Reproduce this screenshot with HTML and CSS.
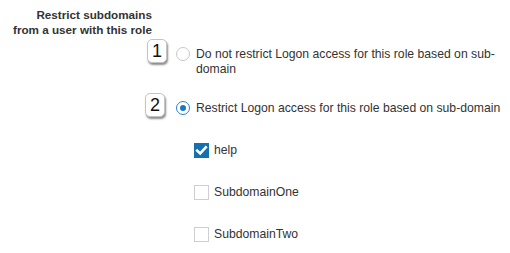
FILE: index.html
```html
<!DOCTYPE html>
<html>
<head>
<meta charset="utf-8">
<link rel="stylesheet" href="styles.css">
</head>
<body>
<div class="field">
  <div class="field-label">Restrict subdomains<br>from a user with this role</div>
  <ul class="radios">
    <li class="radio-row">
      <span class="badge badge-one">1</span>
      <span class="radio"></span>
      <span class="option-text">Do not restrict Logon access for this role based on sub-domain</span>
    </li>
    <li class="radio-row">
      <span class="badge badge-two">2</span>
      <span class="radio radio-checked"></span>
      <span class="option-text">Restrict Logon access for this role based on sub-domain</span>
    </li>
  </ul>
  <ul class="checks">
    <li class="check-row">
      <span class="checkbox checkbox-checked"><svg width="15" height="15" viewBox="0 0 15 15"><polyline points="3.2,7.6 6.2,10.4 11.8,4.4" fill="none" stroke="#fff" stroke-width="2.6" stroke-linecap="square"/></svg></span>
      <span class="check-text">help</span>
    </li>
    <li class="check-row">
      <span class="checkbox"></span>
      <span class="check-text">SubdomainOne</span>
    </li>
    <li class="check-row">
      <span class="checkbox"></span>
      <span class="check-text">SubdomainTwo</span>
    </li>
  </ul>
</div>
</body>
</html>
```
FILE: styles.css
```css
html, body {
  margin: 0;
  padding: 0;
  background: #fff;
}
body {
  font-family: "Liberation Sans", Arial, sans-serif;
  font-size: 12.2px;
  color: #333;
}
.field {
  padding-top: 7px;
}
.field-label {
  width: 152px;
  text-align: right;
  font-weight: bold;
  font-size: 11.7px;
  line-height: 15px;
}
.radios, .checks {
  list-style: none;
  margin: 0;
  padding: 0;
}
.radios {
  margin-top: 10px;
  display: flex;
  flex-direction: column;
  gap: 24px;
}
.radio-row {
  position: relative;
  display: flex;
  align-items: flex-start;
  padding-left: 176px;
  line-height: 15px;
}
.badge {
  position: absolute;
  top: -8px;
  width: 20px;
  height: 24px;
  box-sizing: border-box;
  border: 1px solid #c4c4c4;
  border-radius: 5px;
  background: #fff;
  box-shadow: 1px 2px 2px rgba(0, 0, 0, 0.45);
  font-size: 18px;
  line-height: 23px;
  text-align: center;
  color: #111;
}
.badge-one { left: 147px; }
.badge-two { left: 145px; }
.radio {
  flex: none;
  width: 14px;
  height: 14px;
  box-sizing: border-box;
  border: 1px solid #c9c9c9;
  border-radius: 50%;
  background: #fff;
  margin-right: 6px;
  position: relative;
}
.radio-checked {
  border-color: #2a83c8;
}
.radio-checked::after {
  content: "";
  position: absolute;
  left: 3px;
  top: 3px;
  width: 6px;
  height: 6px;
  border-radius: 50%;
  background: #1a78c2;
}
.option-text {
  flex: 1;
}
.checks {
  margin-top: 27px;
  display: flex;
  flex-direction: column;
  gap: 27px;
  padding-left: 194px;
}
.check-row {
  display: flex;
  align-items: center;
  line-height: 15px;
}
.checkbox {
  flex: none;
  width: 15px;
  height: 15px;
  box-sizing: border-box;
  border: 1px solid #cfcfcf;
  background: #fff;
  margin-right: 5px;
  display: block;
}
.checkbox svg {
  display: block;
}
.checkbox-checked {
  border: none;
  background: #166fae;
}
```
